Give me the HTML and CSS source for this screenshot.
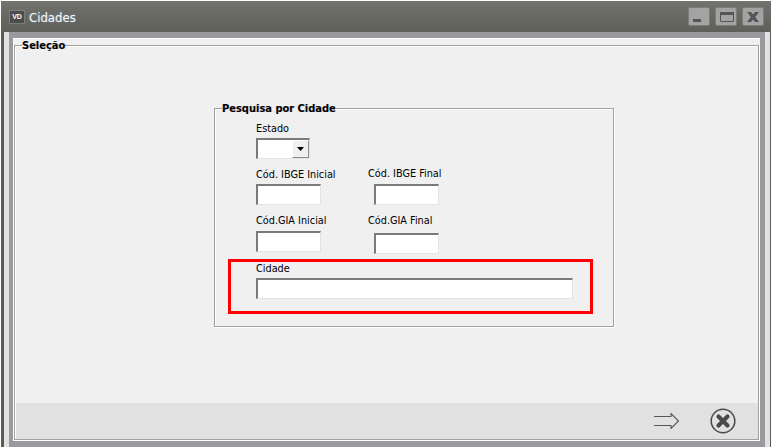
FILE: index.html
```html
<!DOCTYPE html>
<html lang="pt">
<head>
<meta charset="utf-8">
<title>Cidades</title>
<link rel="stylesheet" href="styles.css">
</head>
<body>
<div class="window">
  <header class="titlebar">
    <div class="app-icon"><span>VD</span></div>
    <h1 class="title">Cidades</h1>
    <div class="controls">
      <button class="ctl" aria-label="Minimizar"><svg width="22" height="19" viewBox="0 0 22 19"><rect x="5" y="12" width="8" height="3" fill="#555"/></svg></button>
      <button class="ctl" aria-label="Maximizar"><svg width="22" height="19" viewBox="0 0 22 19"><path d="M5.500 5.500h13v9h-13z" fill="none" stroke="#555"/><rect x="5" y="5" width="14" height="3" fill="#555"/></svg></button>
      <button class="ctl" aria-label="Fechar"><svg width="22" height="19" viewBox="0 0 22 19"><path d="M5 5h4l2 2.500L13 5h4l-3.800 5L17 15h-4l-2-2.500L9 15H5l3.800-5z" fill="#555"/></svg></button>
    </div>
  </header>
  <div class="side-light">
    <div class="side-purple">
      <div class="client">
        <fieldset class="group group-selecao">
          <legend class="legend">Seleção</legend>
          <main class="content">
            <fieldset class="group group-pesquisa">
              <legend class="legend">Pesquisa por Cidade</legend>
              <div class="row row-estado">
                <div class="field">
                  <label class="label">Estado</label>
                  <div class="combo"><span class="combo-btn"><svg width="7" height="4" viewBox="0 0 7 4"><path d="M0 0h7L3.500 4z" fill="#000"/></svg></span></div>
                </div>
              </div>
              <div class="row row-ibge">
                <div class="field"><label class="label">Cód. IBGE Inicial</label><div class="input"></div></div>
                <div class="field field-right"><label class="label">Cód. IBGE Final</label><div class="input"></div></div>
              </div>
              <div class="row row-gia">
                <div class="field"><label class="label">Cód.GIA Inicial</label><div class="input"></div></div>
                <div class="field field-right"><label class="label">Cód.GIA Final</label><div class="input"></div></div>
              </div>
              <div class="row row-cidade">
                <div class="field"><label class="label">Cidade</label><div class="input input-long"></div></div>
              </div>
              <div class="highlight"></div>
            </fieldset>
          </main>
          <footer class="toolbar">
            <svg width="26" height="16" viewBox="0 0 26 16"><path d="M0 3.500H17V.5L24.500 8 17 15.500V12.500H0" fill="none" stroke="#555" stroke-width="1.100"/></svg>
            <svg width="26" height="26" viewBox="0 0 26 26"><circle cx="13" cy="13" r="11.800" fill="none" stroke="#4a4a4a" stroke-width="1.500"/><path d="M8.500 8.500l9 9M17.500 8.500l-9 9" stroke="#4a4a4a" stroke-width="4.200" stroke-linecap="round"/></svg>
          </footer>
        </fieldset>
      </div>
    </div>
  </div>
</div>
</body>
</html>
```
FILE: styles.css
```css
* { box-sizing: border-box; }
html, body { margin: 0; padding: 0; background: #fff; }
body { width: 771px; height: 448px; overflow: hidden; font-family: "DejaVu Sans Condensed", "DejaVu Sans", sans-serif; font-size: 10.800px; color: #000; }
.window { width: 770px; height: 446px; margin: 1px 0 0 1px; background: #5b5b58; display: flex; flex-direction: column; padding: 0 1px 0 3px; }
.titlebar { height: 31px; margin: 0 -1px 0 -3px; padding: 0 7px 0 8px; flex: none; display: flex; align-items: center; background: linear-gradient(#72726e, #5f5f59); }
.app-icon { width: 16px; height: 14px; background: #4c4c4c; border: 1px solid #7c7c7c; display: flex; align-items: center; justify-content: center; }
.app-icon span { font: bold 7px "Liberation Sans", sans-serif; color: #fff; }
.title { margin: 1px 0 0 4px; font-size: 13px; font-weight: normal; color: #f4f8fc; text-shadow: 0 0 2px rgba(170, 210, 250, .5); }
.controls { margin-left: auto; display: flex; gap: 5px; }
.ctl { width: 22px; height: 19px; padding: 0; border: 1px solid #7c7c7a; border-radius: 2px; background: #a3a3a3; display: block; }
.ctl svg { display: block; margin: -1px; }
.side-light { flex: 1; background: #e2e2e2; padding: 0 5px; display: flex; min-height: 0; }
.side-purple { flex: 1; background: #9b999e; padding: 6px 5px 6px 4px; display: flex; min-width: 0; }
.client { flex: 1; background: #f0f0f0; border-top: 1px solid #fff; border-left: 1px solid #fff; display: flex; min-width: 0; padding: 0 1px 1px 0; }
.group { margin: 0; padding: 0; border: 1px solid #a0a0a0; box-shadow: 1px 1px 0 #fff, inset 1px 1px 0 #fff; min-width: 0; }
.group-selecao { flex: 1; display: flex; flex-direction: column; padding: 0 0 0 1px; }
.group-selecao > .legend { margin-left: 6px; }
.legend { padding: 0; margin-left: 7px; font-weight: bold; font-size: 11px; line-height: 13px; color: #000; text-shadow: 1px 0 0 rgba(0, 110, 230, .18), -1px 0 0 rgba(230, 130, 0, .18); }
.content { flex: 1; padding-left: 198px; }
.group-pesquisa { width: 400px; height: 225px; margin-top: 50px; position: relative; }
.row { display: grid; grid-template-columns: 65px 65px; column-gap: 53px; padding-left: 41px; }
.field { display: flex; flex-direction: column; }
.label { display: block; line-height: 13px; margin-bottom: 3px; white-space: nowrap; }
.field-right .label { margin-left: -6px; }
.row-estado { padding-top: 7px; }
.row-ibge { padding-top: 9px; }
.row-ibge .field-right .label { margin-top: -1px; margin-bottom: 4px; }
.row-gia { padding-top: 9px; }
.row-gia .label { margin-bottom: 4px; }
.row-gia .field-right .label { margin-bottom: 6px; }
.row-cidade { padding-top: 8px; }
.row-cidade .label { margin-bottom: 3px; }
.input { height: 21px; background: #fff; border: 1px solid #e3e3e3; border-top: 2px solid #7a7a7a; border-left: 2px solid #7a7a7a; }
.input-long { width: 317px; }
.combo { width: 54px; height: 21px; background: #fff; border: 1px solid #e3e3e3; border-top: 2px solid #7a7a7a; border-left: 2px solid #7a7a7a; display: flex; justify-content: flex-end; }
.combo-btn { width: 17px; background: #f0f0f0; border: 1px solid; border-color: #fff #8c8c8c #8c8c8c #fff; display: flex; align-items: center; justify-content: center; }
.combo-btn svg { display: block; }
.highlight { position: absolute; left: 13px; top: 144px; width: 365px; height: 55px; border: 3px solid #f00; }
.toolbar { flex: none; height: 36px; background: #e1e1e1; display: flex; align-items: center; justify-content: flex-end; padding-right: 22px; gap: 30px; }
.toolbar svg { display: block; }
```
